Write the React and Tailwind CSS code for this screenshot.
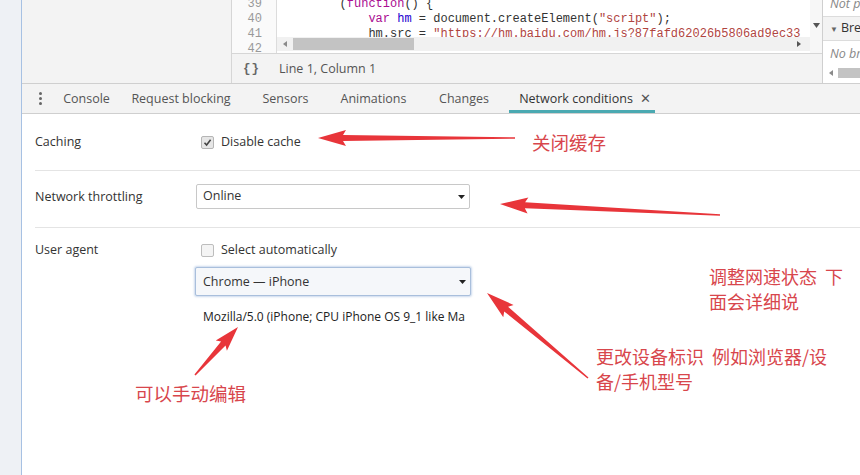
import React from "react";

const ui = { fontFamily: '"Open Sans", "Noto Sans", sans-serif' };
const mono = { fontFamily: '"Liberation Mono", "DejaVu Sans Mono", monospace' };
const cjk = { fontFamily: '"Noto Sans CJK SC", "Noto Sans", sans-serif' };

// tapered arrow: thin at the tail, solid head at the tip
function arrow(tail, tip, headLen, headW, shaftTip, shaftTail) {
  const dx = tip[0] - tail[0];
  const dy = tip[1] - tail[1];
  const len = Math.hypot(dx, dy);
  const ux = dx / len;
  const uy = dy / len;
  const nx = -uy;
  const ny = ux;
  const bx = tip[0] - ux * headLen;
  const by = tip[1] - uy * headLen;
  const p = (x, y, w) => `${x + nx * w},${y + ny * w}`;
  return [
    p(tail[0], tail[1], shaftTail / 2),
    p(bx + ux * 3, by + uy * 3, shaftTip / 2),
    p(bx, by, headW / 2),
    `${tip[0]},${tip[1]}`,
    p(bx, by, -headW / 2),
    p(bx + ux * 3, by + uy * 3, -shaftTip / 2),
    p(tail[0], tail[1], -shaftTail / 2),
  ].join(" ");
}

const tabs = [
  { name: "Console", w: "w-[65px]" },
  { name: "Request blocking", w: "w-[124px]" },
  { name: "Sensors", w: "w-[85px]" },
  { name: "Animations", w: "w-[91px]" },
  { name: "Changes", w: "w-[90px]" },
];

function Checkbox({ checked }) {
  return (
    <span
      className={`flex items-center justify-center w-[13px] h-[13px] rounded-[2px] border ${
        checked ? "bg-[#e6e6e6] border-[#b5b5b5]" : "bg-[#f4f4f4] border-[#bdbdbd]"
      }`}
    >
      {checked && (
        <svg width="9" height="9" viewBox="0 0 9 9">
          <path d="M1.5 4.8 L3.6 7 L7.6 1.8" fill="none" stroke="#444" strokeWidth="1.6" />
        </svg>
      )}
    </span>
  );
}

function Caret() {
  return (
    <svg width="7" height="4" viewBox="0 0 7 4" className="ml-auto mr-[4px]">
      <path d="M0 0 H7 L3.5 4 Z" fill="#222" />
    </svg>
  );
}

export default function App() {
  return (
    <div className="relative w-[860px] h-[475px] overflow-hidden bg-white flex text-[#333]" style={ui}>
      {/* left page strip */}
      <div className="w-[22px] h-full bg-[#eef1f5] border-r border-[#a7c1e3] shrink-0" />

      <div className="flex-1 flex flex-col min-w-0">
        {/* sources panel */}
        <div className="h-[84px] flex border-b border-[#cfcfcf] shrink-0">
          <div className="w-[210px] bg-[#f3f3f3] border-r border-[#d6d6d6]" />
          <div className="flex-1 flex flex-col min-w-0">
            <div className="h-[53px] flex bg-white overflow-hidden">
              <div className="w-[45px] border-r border-[#dcdcdc] bg-[#fafafa] text-[#999] text-[12px] leading-[15px] text-right pr-[14px] -mt-[3px]" style={mono}>
                <div>39</div>
                <div>40</div>
                <div>41</div>
                <div>42</div>
              </div>
              <div className="relative flex-1 overflow-hidden text-[12px] leading-[15px] pl-[5px] whitespace-pre">
                <div className="-mt-[3px]" style={mono}>
                  <div>
                    {"        "}(<span className="text-[#aa0d91]">function</span>() {"{"}
                  </div>
                  <div>
                    {"            "}
                    <span className="text-[#aa0d91]">var</span> <span className="text-[#1c00cf]">hm</span> = document.createElement(
                    <span className="text-[#b0453f]">"script"</span>);
                  </div>
                  <div>
                    {"            "}hm.src = <span className="text-[#b0453f]">"https://hm.baidu.com/hm.js?87fafd62026b5806ad9ec33</span>
                  </div>
                </div>
                <div className="absolute left-0 right-0 top-[37px] h-[14px] bg-[#f1f1f1] flex items-center">
                  <svg width="4" height="6" viewBox="0 0 4 6" className="ml-[6px]">
                    <path d="M4 0 V6 L0 3 Z" fill="#8a8a8a" />
                  </svg>
                  <div className="ml-[6px] w-[121px] h-[12px] bg-[#c3c3c3]" />
                  <svg width="4" height="6" viewBox="0 0 4 6" className="ml-auto mr-[9px]">
                    <path d="M0 0 V6 L4 3 Z" fill="#555" />
                  </svg>
                </div>
              </div>
              <div className="w-[12px] bg-[#f7f7f7] flex justify-center pt-[23px]">
                <svg width="7" height="5" viewBox="0 0 7 5">
                  <path d="M0 0 H7 L3.5 5 Z" fill="#555" />
                </svg>
              </div>
            </div>
            <div className="flex-1 bg-[#f3f3f3] border-t border-[#d6d6d6] flex items-center pt-[2px] text-[12.5px] text-[#555]">
              <span className="ml-[11px] font-bold text-[#666] tracking-[1px]" style={mono}>{"{}"}</span>
              <span className="ml-[19px]">Line 1, Column 1</span>
            </div>
          </div>
          {/* right sidebar */}
          <div className="w-[38px] border-l border-[#cfcfcf] bg-white flex flex-col text-[12.5px] overflow-hidden whitespace-nowrap">
            <div className="h-[17px] border-b border-[#dcdcdc] italic text-[#888] pl-[7px] leading-[8px]">Not p</div>
            <div className="h-[24px] border-b border-[#dcdcdc] bg-[#f3f3f3] flex items-center pl-[7px] text-[#333]">
              <span className="text-[8px] text-[#666] mr-[3px]">▼</span>Bre
            </div>
            <div className="h-[26px] italic text-[#888] pl-[7px] flex items-center">No br</div>
            <div className="h-[11px] flex items-center pl-[6px]">
              <svg width="4" height="6" viewBox="0 0 4 6">
                <path d="M4 0 V6 L0 3 Z" fill="#8a8a8a" />
              </svg>
              <div className="ml-[5px] flex-1 h-[10px] bg-[#c3c3c3]" />
            </div>
          </div>
        </div>

        {/* drawer tabs */}
        <div className="h-[30px] bg-[#f3f3f3] border-b border-[#cfcfcf] flex items-stretch text-[12.5px] text-[#555] shrink-0">
          <div className="w-[32px] flex flex-col items-center justify-center gap-[2px] pl-[4px]">
            <span className="w-[3px] h-[3px] rounded-full bg-[#666]" />
            <span className="w-[3px] h-[3px] rounded-full bg-[#666]" />
            <span className="w-[3px] h-[3px] rounded-full bg-[#666]" />
          </div>
          {tabs.map((t) => (
            <div key={t.name} className={`${t.w} flex items-center justify-center pt-[2px]`}>
              {t.name}
            </div>
          ))}
          <div className="w-[146px] flex items-center justify-center border-b-[3px] border-[#4aa9b1] pt-[4px] pl-[6px] text-[#333]">
            Network conditions
            <span className="ml-[7px] text-[#555] text-[13px]">✕</span>
          </div>
        </div>

        {/* network conditions */}
        <div className="flex-1 pl-[13px] text-[12.5px]">
          <div className="flex border-b border-[#e4e4e4] pt-[19px] pb-[19px] leading-[18px]">
            <div className="w-[161px]">Caching</div>
            <label className="flex items-center gap-[7px] pl-[5px]">
              <Checkbox checked />
              Disable cache
            </label>
          </div>

          <div className="flex items-center border-b border-[#e4e4e4] pt-[13px] pb-[18px]">
            <div className="w-[161px] pt-[2px]">Network throttling</div>
            <div className="w-[274px] h-[25px] border border-[#c8c8c8] rounded-[2px] bg-white flex items-center pl-[6px]">
              Online
              <Caret />
            </div>
          </div>

          <div className="flex pt-[13px] leading-[18px]">
            <div className="w-[161px]">User agent</div>
            <div className="flex flex-col">
              <label className="flex items-center gap-[7px] pl-[5px]">
                <Checkbox />
                Select automatically
              </label>
              <div className="mt-[8px] -ml-[1px] w-[276px] h-[29px] border border-[#a9bfdc] rounded-[2px] bg-[#f5f7fa] shadow-[0_0_2px_1px_rgba(140,170,215,0.45)] flex items-center pl-[7px]">
                Chrome — iPhone
                <Caret />
              </div>
              <div className="mt-[12px] ml-[7px] w-[262px] overflow-hidden whitespace-nowrap text-[12px] tracking-[0px] text-[#222]">
                Mozilla/5.0 (iPhone; CPU iPhone OS 9_1 like Mac OS X) AppleWebKit/601.1.46
              </div>
            </div>
          </div>
        </div>
      </div>

      {/* annotations */}
      <svg className="absolute inset-0 pointer-events-none" width="860" height="475">
        <g fill="#e8353a">
          <polygon points={arrow([515, 138], [318, 138], 28, 16, 6, 1.5)} />
          <polygon points={arrow([720, 215], [500, 204], 28, 16, 6, 1.5)} />
          <polygon points={arrow([588, 378], [487, 293], 28, 16, 6, 1.5)} />
          <polygon points={arrow([195, 375], [238, 327], 25, 15, 6, 1.5)} />
        </g>
      </svg>
      <div className="absolute left-[532px] top-[130px] text-[18.5px] leading-[24px] text-[#d8464c] pointer-events-none" style={cjk}>
        关闭缓存
      </div>
      <div className="absolute left-[709px] top-[264px] text-[18px] leading-[25px] text-[#d8464c] whitespace-pre pointer-events-none" style={cjk}>
        {"调整网速状态  下\n面会详细说"}
      </div>
      <div className="absolute left-[596px] top-[344px] text-[18px] leading-[25px] text-[#d8464c] whitespace-pre pointer-events-none" style={cjk}>
        {"更改设备标识  例如浏览器/设\n备/手机型号"}
      </div>
      <div className="absolute left-[135px] top-[380px] text-[18.5px] leading-[26px] text-[#d8464c] pointer-events-none" style={cjk}>
        可以手动编辑
      </div>
    </div>
  );
}
